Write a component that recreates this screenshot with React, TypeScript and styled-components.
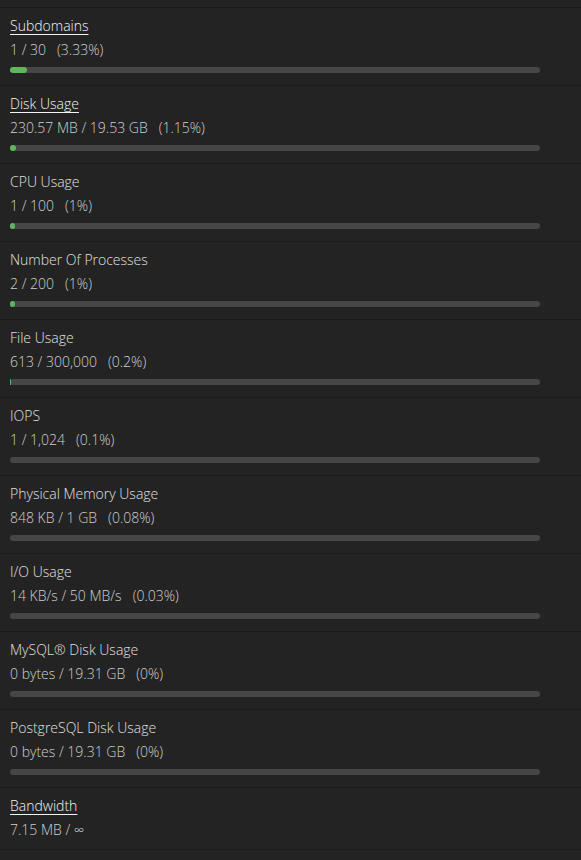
import React from "react";
import styled, { createGlobalStyle } from "styled-components";

const Global = createGlobalStyle`
  html, body {
    margin: 0;
    padding: 0;
    background: #232323;
  }
  body {
    font-family: "Open Sans", "Liberation Sans", sans-serif;
    font-size: 14px;
    font-weight: 300;
    color: #cccccc;
  }
`;

type Stat = {
  title: string;
  link?: boolean;
  value: string;
  pct?: string;
  fill?: number;
};

const stats: Stat[] = [
  { title: "Subdomains", link: true, value: "1 / 30", pct: "3.33%", fill: 3.33 },
  { title: "Disk Usage", link: true, value: "230.57 MB / 19.53 GB", pct: "1.15%", fill: 1.15 },
  { title: "CPU Usage", value: "1 / 100", pct: "1%", fill: 1 },
  { title: "Number Of Processes", value: "2 / 200", pct: "1%", fill: 1 },
  { title: "File Usage", value: "613 / 300,000", pct: "0.2%", fill: 0.2 },
  { title: "IOPS", value: "1 / 1,024", pct: "0.1%", fill: 0.1 },
  { title: "Physical Memory Usage", value: "848 KB / 1 GB", pct: "0.08%", fill: 0.08 },
  { title: "I/O Usage", value: "14 KB/s / 50 MB/s", pct: "0.03%", fill: 0.03 },
  { title: "MySQL® Disk Usage", value: "0 bytes / 19.31 GB", pct: "0%", fill: 0 },
  { title: "PostgreSQL Disk Usage", value: "0 bytes / 19.31 GB", pct: "0%", fill: 0 },
  { title: "Bandwidth", link: true, value: "7.15 MB / ∞" },
];

const TRACK_WIDTH = 530;

const Panel = styled.div`
  padding-top: 7px;
  min-height: 860px;
  box-sizing: border-box;
  background: #232323;
`;

const Row = styled.div<{ $last?: boolean }>`
  border-top: 1px solid #1a1a1a;
  border-bottom: ${(p) => (p.$last ? "1px solid #1a1a1a" : "none")};
  padding: 8px 10px ${(p) => (p.$last ? "9px" : "12px")} 10px;
  display: flex;
  flex-direction: column;
`;

const Title = styled.div<{ $link?: boolean }>`
  line-height: 20px;
  color: ${(p) => (p.$link ? "#f4f4f4" : "#e0e0e0")};
  text-decoration: ${(p) => (p.$link ? "underline" : "none")};
  text-underline-offset: 3px;
  text-decoration-thickness: 1px;
  align-self: flex-start;
`;

const Value = styled.div`
  margin-top: 4px;
  line-height: 20px;
  color: #d0d0d0;
  white-space: pre;
`;

const Pct = styled.span`
  margin-left: 11px;
`;

const Track = styled.div`
  margin-top: 7px;
  width: ${TRACK_WIDTH}px;
  height: 6px;
  border-radius: 3px;
  background: #464646;
`;

const Fill = styled.div`
  height: 6px;
  border-radius: 3px;
  background: #5cb85c;
`;

export default function App() {
  return (
    <>
      <Global />
      <Panel>
        {stats.map((s, i) => {
          const px = s.fill !== undefined ? Math.floor((s.fill / 100) * TRACK_WIDTH) : 0;
          return (
            <Row key={s.title} $last={i === stats.length - 1}>
              <Title $link={s.link}>{s.title}</Title>
              <Value>
                {s.value}
                {s.pct && <Pct>({s.pct})</Pct>}
              </Value>
              {s.fill !== undefined && (
                <Track>{px > 0 && <Fill style={{ width: `${px}px` }} />}</Track>
              )}
            </Row>
          );
        })}
      </Panel>
    </>
  );
}
